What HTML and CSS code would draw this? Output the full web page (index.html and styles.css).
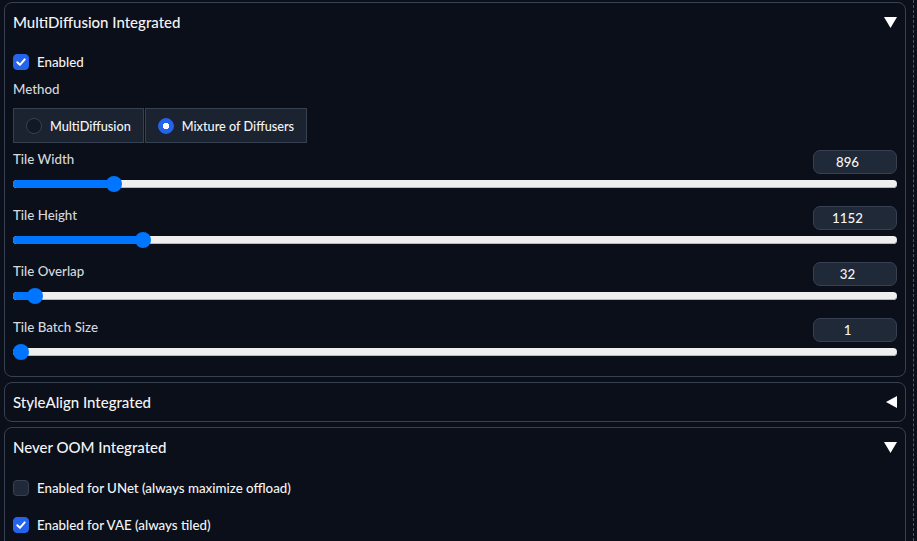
FILE: index.html
```html
<!DOCTYPE html>
<html lang="en">
<head>
  <meta charset="UTF-8" />
  <title>Integrated extensions</title>
  <link rel="stylesheet" href="styles.css">
</head>
<body>

<div class="page">
  <div class="stack">

    <!-- MultiDiffusion -->
    <section class="panel">
      <div class="panel-head">
        <span class="panel-title">MultiDiffusion Integrated</span>
        <svg class="caret" width="13" height="11" viewBox="0 0 13 11"><path d="M0 0 H13 L6.5 11 Z" fill="#fff"/></svg>
      </div>
      <div class="panel-body">
        <label class="check">
          <span class="box on"><svg width="16" height="16" viewBox="0 0 16 16"><path d="M4.3 8.3 L6.9 10.8 L11.7 5.4" fill="none" stroke="#fff" stroke-width="2" stroke-linecap="round" stroke-linejoin="round"/></svg></span>
          Enabled
        </label>
        <div class="field-label">Method</div>
        <div class="radios">
          <label class="radio"><span class="dot"></span>MultiDiffusion</label>
          <label class="radio"><span class="dot on"></span>Mixture of Diffusers</label>
        </div>

        <div class="slider-block">
          <div class="slider-head"><span class="field-label">Tile Width</span><div class="num">896</div></div>
          <div class="slider">
            <div class="track"><div class="fill" style="width: calc(0.107 * (100% - 16px) + 8px)"></div></div>
            <div class="thumb" style="left: calc(0.107 * (100% - 16px))"></div>
          </div>
        </div>

        <div class="slider-block">
          <div class="slider-head"><span class="field-label">Tile Height</span><div class="num">1152</div></div>
          <div class="slider">
            <div class="track"><div class="fill" style="width: calc(0.14 * (100% - 16px) + 8px)"></div></div>
            <div class="thumb" style="left: calc(0.14 * (100% - 16px))"></div>
          </div>
        </div>

        <div class="slider-block">
          <div class="slider-head"><span class="field-label">Tile Overlap</span><div class="num">32</div></div>
          <div class="slider">
            <div class="track"><div class="fill" style="width: calc(0.016 * (100% - 16px) + 8px)"></div></div>
            <div class="thumb" style="left: calc(0.016 * (100% - 16px))"></div>
          </div>
        </div>

        <div class="slider-block">
          <div class="slider-head"><span class="field-label">Tile Batch Size</span><div class="num">1</div></div>
          <div class="slider">
            <div class="track"><div class="fill" style="width: 8px"></div></div>
            <div class="thumb" style="left: 0"></div>
          </div>
        </div>
      </div>
    </section>

    <!-- StyleAlign -->
    <section class="panel">
      <div class="panel-head">
        <span class="panel-title">StyleAlign Integrated</span>
        <svg class="caret" width="11" height="12" viewBox="0 0 11 12"><path d="M11 0 V12 L0 6 Z" fill="#fff"/></svg>
      </div>
    </section>

    <!-- Never OOM -->
    <section class="panel">
      <div class="panel-head">
        <span class="panel-title">Never OOM Integrated</span>
        <svg class="caret" width="13" height="11" viewBox="0 0 13 11"><path d="M0 0 H13 L6.5 11 Z" fill="#fff"/></svg>
      </div>
      <div class="panel-body oom">
        <label class="check"><span class="box"></span>Enabled for UNet (always maximize offload)</label>
        <label class="check">
          <span class="box on"><svg width="16" height="16" viewBox="0 0 16 16"><path d="M4.3 8.3 L6.9 10.8 L11.7 5.4" fill="none" stroke="#fff" stroke-width="2" stroke-linecap="round" stroke-linejoin="round"/></svg></span>
          Enabled for VAE (always tiled)
        </label>
      </div>
    </section>

  </div>
  <div class="divider"></div>
</div>

</body>
</html>
```

FILE: styles.css
```css
* {
  box-sizing: border-box;
}

html, body {
  margin: 0;
  padding: 0;
  background: #0b0f19;
  color: #f3f4f6;
  font-family: 'Lato', 'Open Sans', sans-serif;
  font-weight: 500;
  width: 917px;
  height: 541px;
  overflow: hidden;
}

.page {
  display: flex;
  gap: 7px;
  padding: 2px 0 0 4px;
}

.stack {
  width: 902px;
  display: flex;
  flex-direction: column;
  gap: 5px;
}

.divider {
  width: 0;
  height: 541px;
  margin-top: -2px;
  border-left: 1px dashed #4b5563;
}

.panel {
  border: 1px solid #374151;
  border-radius: 8px;
  background: #0b0f19;
}

.panel-head {
  height: 38px;
  padding: 0 8px;
  display: flex;
  align-items: center;
  justify-content: space-between;
}

.panel-title {
  font-size: 15px;
  line-height: 20px;
}

.panel-body {
  padding: 11px 8px 16px;
}

.panel-body.oom {
  padding-top: 12px;
  display: flex;
  flex-direction: column;
  gap: 17px;
}

/* checkbox */
.check {
  display: flex;
  align-items: center;
  gap: 8px;
  height: 20px;
  font-size: 13.3px;
  color: #f3f4f6;
}

.box {
  width: 16px;
  height: 16px;
  border-radius: 4px;
  border: 1px solid #374151;
  background: #1f2937;
  display: flex;
  flex-shrink: 0;
}

.box.on {
  background: #2563eb;
  border-color: #2563eb;
}

.box.on svg {
  margin: -1px;
}

.field-label {
  font-size: 13.3px;
  line-height: 18px;
  color: #d5d9df;
}

.panel-body > .field-label {
  margin-top: 8px;
}

/* radio group */
.radios {
  display: flex;
  gap: 1px;
  margin-top: 10px;
}

.radio {
  height: 35px;
  padding: 0 12px;
  display: flex;
  align-items: center;
  gap: 8px;
  background: #1b2230;
  border: 1px solid #374151;
  font-size: 12.7px;
  color: #f3f4f6;
}

.dot {
  width: 16px;
  height: 16px;
  border-radius: 50%;
  border: 1px solid #374151;
  background: #111827;
}

.dot.on {
  border-color: #2563eb;
  background: radial-gradient(circle, #fff 0 3px, #2563eb 3.5px);
}

/* sliders */
.slider-block {
  margin-top: 14px;
}

.radios + .slider-block {
  margin-top: 7px;
}

.slider-head {
  display: flex;
  justify-content: space-between;
  align-items: flex-start;
  height: 24px;
}

.slider-head .field-label {
  margin-top: 0;
}

.num {
  width: 84px;
  height: 24px;
  padding-right: 15px;
  border-radius: 7px;
  border: 1px solid #374151;
  background: #1f2937;
  font-size: 13.3px;
  line-height: 22px;
  text-align: center;
  color: #f3f4f6;
}

.slider {
  position: relative;
  height: 16px;
  margin-top: 2px;
  display: flex;
  align-items: center;
}

.track {
  flex: 1;
  height: 8px;
  border-radius: 4px;
  background: #efefef;
  box-shadow: inset 0 -1px 0 #b8b8b8;
  overflow: hidden;
}

.fill {
  height: 100%;
  background: #0075ff;
}

.thumb {
  position: absolute;
  top: 0;
  width: 16px;
  height: 16px;
  border-radius: 50%;
  background: #0075ff;
}
```
